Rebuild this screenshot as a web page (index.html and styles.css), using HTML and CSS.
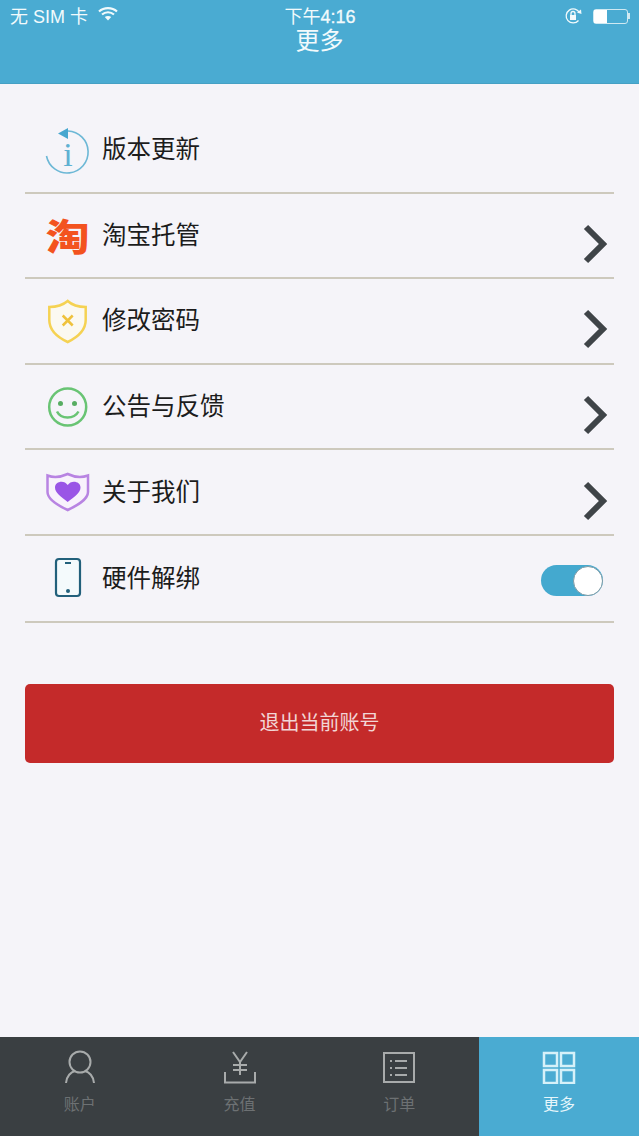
FILE: index.html
```html
<!DOCTYPE html>
<html lang="zh-CN">
<head>
<meta charset="UTF-8" />
<meta name="viewport" content="width=device-width, initial-scale=1" />
<title>更多</title>
<link rel="stylesheet" href="styles.css">
</head>
<body>

<div class="page">
  <header class="header">
    <div class="status">
      <div class="status-left">
        <span>无 SIM 卡</span>
        <svg class="wifi" viewBox="0 0 20 15" width="20" height="15">
          <path d="M1 5.5C6 1 14 1 19 5.5" />
          <path d="M4 8.5C7.500 5.500 12.500 5.500 16 8.500" />
          <path class="wifi-dot" d="M10 14.500L6.800 11C8.500 9.500 11.500 9.500 13.200 11Z" />
        </svg>
      </div>
      <div class="status-time">下午<b>4:16</b></div>
      <div class="status-right">
        <svg class="lock" viewBox="0 0 18 18" width="18" height="18">
          <path d="M14.500 13.500A7 7 0 1 1 15.500 6" />
          <path class="lock-tip" d="M13 5.500L17.500 7L17 2.500Z" />
          <rect class="lock-body" x="6" y="8" width="6" height="5" />
          <path d="M7 8V6.500A2 2 0 0 1 11 6.500V8" />
        </svg>
        <div class="battery">
          <div class="battery-level"></div>
        </div>
        <div class="battery-tip"></div>
      </div>
    </div>
    <h1 class="title">更多</h1>
  </header>

  <main class="main">
    <ul class="menu">
      <li class="row">
        <div class="row-icon">
          <svg viewBox="0 0 50 50" width="50" height="50">
            <path class="ic-info" d="M26 6A21 21 0 1 1 4.500 31" />
            <path class="ic-info-arrow" d="M16 8.500L26 3V14Z" />
            <text class="ic-info-i" x="26" y="41" text-anchor="middle">i</text>
          </svg>
        </div>
        <span class="row-label">版本更新</span>
      </li>
      <li class="row">
        <div class="row-icon"><span class="taobao">淘</span></div>
        <span class="row-label">淘宝托管</span>
        <svg class="chevron" viewBox="0 0 26 42" width="26" height="42"><path d="M4 4L21 21L4 38" /></svg>
      </li>
      <li class="row">
        <div class="row-icon">
          <svg viewBox="0 0 50 50" width="50" height="50">
            <path class="ic-shield" d="M25.700 5C21 9 14 11 7.300 11V24C7.300 35 17 42 25.700 46C34 42 43.700 35 43.700 24V11C37 11 30 9 25.700 5Z" />
            <path class="ic-shield-x" d="M20.700 19.500L30.700 29.500M30.700 19.500L20.700 29.500" />
          </svg>
        </div>
        <span class="row-label">修改密码</span>
        <svg class="chevron" viewBox="0 0 26 42" width="26" height="42"><path d="M4 4L21 21L4 38" /></svg>
      </li>
      <li class="row">
        <div class="row-icon">
          <svg viewBox="0 0 50 50" width="50" height="50">
            <circle class="ic-smile" cx="25.700" cy="25" r="18.500" />
            <circle class="ic-smile-eye" cx="18.500" cy="21.500" r="2.500" />
            <circle class="ic-smile-eye" cx="32.500" cy="21.500" r="2.500" />
            <path class="ic-smile" d="M15 29.500C19 37.500 32 37.500 36.500 29.500" />
          </svg>
        </div>
        <span class="row-label">公告与反馈</span>
        <svg class="chevron" viewBox="0 0 26 42" width="26" height="42"><path d="M4 4L21 21L4 38" /></svg>
      </li>
      <li class="row">
        <div class="row-icon">
          <svg viewBox="0 0 50 50" width="50" height="50">
            <path class="ic-badge" d="M5.500 8.500C12 11 19 10 25.700 7C32 10 39 11 46 8.500V25C46 33 34 39 25.700 43C17 39 5.500 33 5.500 25Z" />
            <path class="ic-heart" d="M25.700 35C19 29.500 13 26 13 20.500C13 14 22.500 12.500 25.700 18C29 12.500 38.500 14 38.500 20.500C38.500 26 32.500 29.500 25.700 35Z" />
          </svg>
        </div>
        <span class="row-label">关于我们</span>
        <svg class="chevron" viewBox="0 0 26 42" width="26" height="42"><path d="M4 4L21 21L4 38" /></svg>
      </li>
      <li class="row">
        <div class="row-icon">
          <svg viewBox="0 0 50 50" width="50" height="50">
            <rect class="ic-phone" x="14" y="6" width="24" height="37" rx="3" />
            <path class="ic-phone-line" d="M23 10H29" />
            <circle class="ic-phone-dot" cx="26" cy="38" r="2" />
          </svg>
        </div>
        <span class="row-label">硬件解绑</span>
        <div class="toggle"><div class="toggle-knob"></div></div>
      </li>
    </ul>

    <button class="logout">退出当前账号</button>
  </main>

  <nav class="tabs">
    <div class="tab">
      <svg viewBox="0 0 34 34" width="34" height="34">
        <circle cx="17" cy="12" r="10.500" />
        <path d="M3 33C3.500 26 8 22 12 21M31 33C30.500 26 26 22 22 21" />
      </svg>
      <span>账户</span>
    </div>
    <div class="tab">
      <svg viewBox="0 0 34 34" width="34" height="34">
        <path d="M10 2L17 12L24 2M17 12V25M10 15H24M10 20H24" />
        <path d="M2 22V32.500H32V22" />
      </svg>
      <span>充值</span>
    </div>
    <div class="tab">
      <svg viewBox="0 0 34 34" width="34" height="34">
        <rect x="2" y="3" width="30" height="29" />
        <path d="M13 11H25M13 18H25M13 25H25" />
        <path d="M8 11H10M8 18H10M8 25H10" />
      </svg>
      <span>订单</span>
    </div>
    <div class="tab active">
      <svg viewBox="0 0 34 34" width="34" height="34">
        <rect x="2" y="3" width="13" height="13" />
        <rect x="19" y="3" width="13" height="13" />
        <rect x="2" y="20" width="13" height="13" />
        <rect x="19" y="20" width="13" height="13" />
      </svg>
      <span>更多</span>
    </div>
  </nav>
</div>

</body>
</html>
```

FILE: styles.css
```css
* {
  box-sizing: border-box;
}
body {
  margin: 0;
  background: #f5f4f9;
  font-family: "Liberation Sans", "Noto Sans CJK SC", sans-serif;
}
.page {
  display: flex;
  flex-direction: column;
  height: 1136px;
  overflow: hidden;
}

/* header + status bar */
.header {
  height: 84px;
  background: #4aabd2;
  color: #f2fafc;
  border-bottom: 1px solid #45a0c4;
}
.status {
  display: grid;
  grid-template-columns: 1fr auto 1fr;
  align-items: center;
  height: 32px;
  padding: 0 9px 2px 10px;
  font-size: 18px;
}
.status-left {
  display: flex;
  align-items: center;
  gap: 10px;
}
.wifi {
  margin-top: -3px;
}
.wifi path {
  fill: none;
  stroke: #f2fafc;
  stroke-width: 2.2;
}
.wifi .wifi-dot {
  fill: #f2fafc;
  stroke: none;
}
.status-time b {
  font-weight: normal;
  -webkit-text-stroke: 0.3px #f2fafc;
}
.status-right {
  display: flex;
  align-items: center;
  justify-content: flex-end;
  margin-top: 2px;
}
.lock {
  margin-right: 11px;
}
.lock path {
  fill: none;
  stroke: #f2fafc;
  stroke-width: 1.3;
}
.lock .lock-tip,
.lock .lock-body {
  fill: #f2fafc;
  stroke: none;
}
.battery {
  width: 35px;
  height: 15px;
  border: 1px solid #cfe9f2;
  border-radius: 3px;
}
.battery-level {
  width: 13px;
  height: 100%;
  background: #fff;
}
.battery-tip {
  width: 2px;
  height: 6px;
  background: #cfe9f2;
}
.title {
  margin: 0;
  font-size: 24px;
  font-weight: normal;
  line-height: 18px;
  text-align: center;
}

/* list */
.main {
  flex: 1;
  padding: 24px 25px 0;
}
.menu {
  margin: 0;
  padding: 0;
  list-style: none;
}
.row {
  display: flex;
  align-items: center;
  height: 85.6px;
  padding: 0 6px 0 17px;
  border-bottom: 2px solid #cdc9bd;
}
.row:last-child {
  height: 86.6px;
}
.row-icon {
  display: flex;
  align-items: center;
  justify-content: center;
  width: 50px;
  height: 50px;
  margin-right: 10px;
}
.row-label {
  flex: 1;
  margin-bottom: 4px;
  font-size: 24.500px;
  color: #1c1c1c;
}
.chevron {
  margin-top: 17px;
}
.chevron path {
  fill: none;
  stroke: #3f4448;
  stroke-width: 6;
}

.ic-info {
  fill: none;
  stroke: #6db8d6;
  stroke-width: 1.600;
}
.ic-info-arrow {
  fill: #47a7cf;
}
.ic-info-i {
  font-family: "Liberation Serif", serif;
  font-size: 34px;
  fill: #5fb1d2;
}
.taobao {
  font-family: "Noto Sans CJK SC", sans-serif;
  font-size: 37px;
  font-weight: 900;
  line-height: 50px;
  color: #f3531f;
  transform: scaleX(1.18);
}
.ic-shield {
  fill: #fbf9f1;
  stroke: #f5d253;
  stroke-width: 2.500;
}
.ic-shield-x {
  fill: none;
  stroke: #efc23c;
  stroke-width: 2.500;
}
.ic-smile {
  fill: none;
  stroke: #69c474;
  stroke-width: 2.500;
}
.ic-smile-eye {
  fill: #57ad62;
}
.ic-badge {
  fill: #f8f2fc;
  stroke: #b884e2;
  stroke-width: 2.500;
}
.ic-heart {
  fill: #9a55e6;
}
.ic-phone {
  fill: #f4fafc;
  stroke: #22607b;
  stroke-width: 2.200;
}
.ic-phone-line {
  stroke: #22607b;
  stroke-width: 2;
}
.ic-phone-dot {
  fill: #22607b;
}

.toggle {
  display: flex;
  justify-content: flex-end;
  align-items: center;
  width: 62px;
  height: 31px;
  margin: 5px 5px 0 0;
  border-radius: 16px;
  background: #44a9cf;
}
.toggle-knob {
  width: 30px;
  height: 30px;
  border: 1px solid #7c9aa6;
  border-radius: 50%;
  background: #fff;
}

.logout {
  display: block;
  width: 100%;
  height: 79px;
  margin-top: 61px;
  padding: 0 0 4px;
  border: none;
  border-radius: 5px;
  background: #c42a2a;
  color: #f2d6d6;
  font-family: inherit;
  font-size: 20px;
}

/* bottom tabs */
.tabs {
  display: grid;
  grid-template-columns: repeat(4, 1fr);
  height: 99px;
  background: #3a3f42;
}
.tab {
  display: flex;
  flex-direction: column;
  align-items: center;
  padding-top: 13px;
  color: #6d7173;
  font-size: 16px;
}
.tab span {
  margin-top: 9px;
  line-height: 24px;
}
.tab svg * {
  fill: none;
  stroke: #a8abab;
  stroke-width: 2;
}
.tab.active {
  background: #4aabd2;
  color: #e6f6fb;
}
.tab.active svg * {
  stroke: #d6f1f9;
  stroke-width: 2.500;
}
```
